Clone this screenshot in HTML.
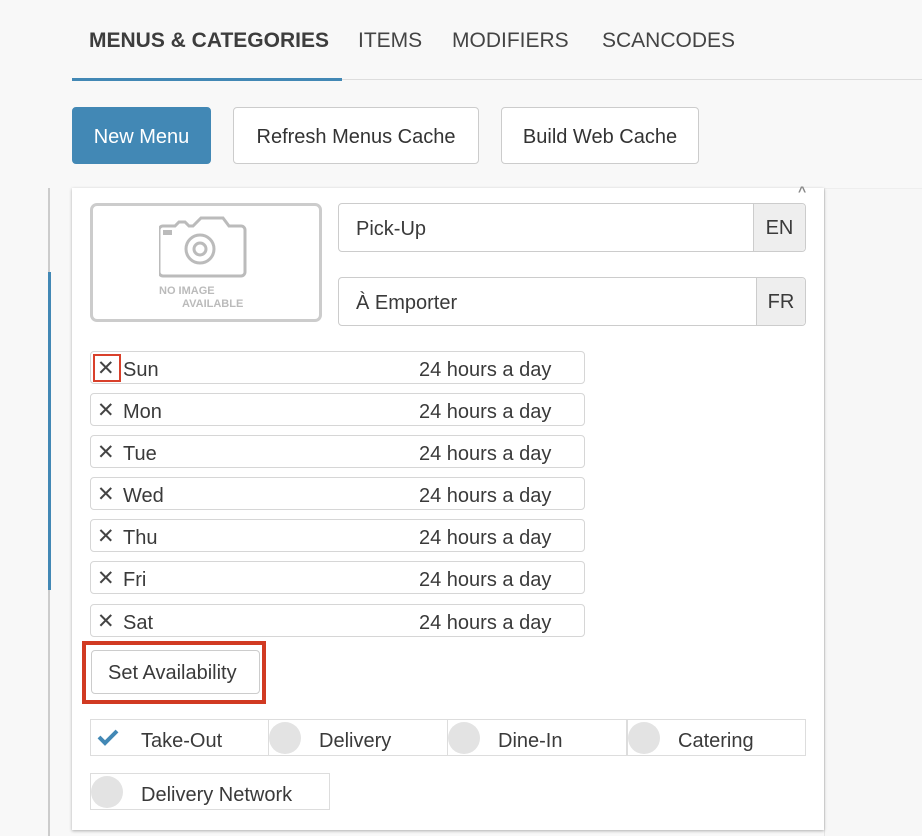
<!DOCTYPE html>
<html><head><meta charset="utf-8"><style>
*{box-sizing:border-box;margin:0;padding:0}
body{width:922px;height:836px;background:#f8f8f8;font-family:"Liberation Sans",sans-serif;color:#3a3a3a;position:relative;overflow:hidden}
.a{position:absolute}
.tab{position:absolute;top:29px;font-size:21px;color:#444}
.btn{position:absolute;top:107px;height:57px;border:1px solid #ccc;border-radius:4px;background:#fff;font-size:20px;display:flex;align-items:center;justify-content:center;color:#333;padding-top:3px}
.day{position:absolute;left:90px;width:495px;height:33px;border:1px solid #d6d6d6;border-radius:4px;background:#fff;font-size:20px}
.day .x{position:absolute;left:6px;top:6px;font-size:21px;line-height:21px;color:#444;font-weight:300}
.day .n{position:absolute;left:32px;top:7px}
.day .h{position:absolute;left:328px;top:7px}
.cell{position:absolute;height:37px;border:1px solid #ddd;background:#fff;font-size:20px}
.cell .c{position:absolute;left:0;top:2px;width:32px;height:32px;border-radius:50%;background:#e3e3e3}
.cell span{position:absolute;left:50px;top:10px}
.inp{position:absolute;left:338px;width:468px;height:49px;border:1px solid #ccc;border-radius:4px;background:#fff;font-size:20px}
.inp span{position:absolute;left:17px;top:14px}
.inp .ad{position:absolute;right:0;top:0;bottom:0;background:#eee;border-left:1px solid #ccc;display:flex;align-items:center;justify-content:center;border-radius:0 4px 4px 0;padding-top:2px}
</style></head><body>
<div class="tab" style="left:89px;font-weight:bold;color:#3d3d3d">MENUS &amp; CATEGORIES</div>
<div class="tab" style="left:358px">ITEMS</div>
<div class="tab" style="left:452px">MODIFIERS</div>
<div class="tab" style="left:602px">SCANCODES</div>
<div class="a" style="left:72px;top:79px;width:850px;height:1px;background:#ddd"></div>
<div class="a" style="left:72px;top:78px;width:270px;height:3px;background:#4288b5"></div>
<div class="btn" style="left:72px;width:139px;background:#4288b5;border-color:#4288b5;color:#fff">New Menu</div>
<div class="btn" style="left:233px;width:246px">Refresh Menus Cache</div>
<div class="btn" style="left:501px;width:198px">Build Web Cache</div>
<div class="a" style="left:48px;top:188px;width:2px;height:648px;background:#ccc"></div>
<div class="a" style="left:48px;top:272px;width:3px;height:318px;background:#4288b5"></div>
<div class="a" style="left:824px;top:188px;width:98px;height:648px;background:#f7f7f7;border-left:1px solid #e6e6e6;border-top:1px solid #eee"></div>
<div class="a" style="left:72px;top:188px;width:752px;height:642px;background:#fff;box-shadow:0 1px 3px rgba(0,0,0,.3)"></div>
<div class="a" style="left:798px;top:183px;font-size:14px;color:#888;font-weight:bold">^</div>
<div class="a" style="left:90px;top:203px;width:232px;height:119px;border:3px solid #ccc;border-radius:7px;background:#fff">
<svg class="a" style="left:66px;top:10px" width="88" height="65" viewBox="0 0 88 65"><path d="M4 10h12l4-4h6l4 4h4l8-8h22l6 8h12a4 4 0 0 1 4 4v42a4 4 0 0 1-4 4H4a4 4 0 0 1-4-4V14a4 4 0 0 1 4-4z" fill="none" stroke="#bbb" stroke-width="3"/><rect x="4" y="14" width="9" height="5" fill="#bbb"/><circle cx="41" cy="33" r="14" fill="none" stroke="#bbb" stroke-width="3"/><circle cx="41" cy="33" r="6" fill="none" stroke="#bbb" stroke-width="3"/></svg>
<div class="a" style="left:66px;top:79px;font-size:11px;color:#bbb;font-weight:bold">NO IMAGE</div>
<div class="a" style="left:89px;top:92px;font-size:11px;color:#bbb;font-weight:bold">AVAILABLE</div>
</div>
<div class="inp" style="top:203px"><span>Pick-Up</span><div class="ad" style="width:52px">EN</div></div>
<div class="inp" style="top:277px"><span>À Emporter</span><div class="ad" style="width:49px">FR</div></div>
<div class="day" style="top:351px"><div class="a" style="left:2px;top:2px;width:28px;height:28px;border:2px solid #d9402b"></div><span class="x">✕</span><span class="n">Sun</span><span class="h">24 hours a day</span></div>
<div class="day" style="top:393px"><span class="x">✕</span><span class="n">Mon</span><span class="h">24 hours a day</span></div>
<div class="day" style="top:435px"><span class="x">✕</span><span class="n">Tue</span><span class="h">24 hours a day</span></div>
<div class="day" style="top:477px"><span class="x">✕</span><span class="n">Wed</span><span class="h">24 hours a day</span></div>
<div class="day" style="top:519px"><span class="x">✕</span><span class="n">Thu</span><span class="h">24 hours a day</span></div>
<div class="day" style="top:561px"><span class="x">✕</span><span class="n">Fri</span><span class="h">24 hours a day</span></div>
<div class="day" style="top:604px"><span class="x">✕</span><span class="n">Sat</span><span class="h">24 hours a day</span></div>
<div class="a" style="left:82px;top:641px;width:184px;height:63px;border:4px solid #d13a22"></div>
<div class="a" style="left:91px;top:650px;width:169px;height:44px;border:1px solid #ccc;border-radius:4px;background:#fff;font-size:20px;padding:11px 0 0 16px">Set Availability</div>
<div class="cell" style="left:90px;top:719px;width:179px"><svg class="a" style="left:6px;top:8px" width="22" height="18" viewBox="0 0 22 18"><path d="M2 9l6 6L20 3" fill="none" stroke="#4288b5" stroke-width="4"/></svg><span>Take-Out</span></div>
<div class="cell" style="left:268px;top:719px;width:180px"><div class="c"></div><span>Delivery</span></div>
<div class="cell" style="left:447px;top:719px;width:180px"><div class="c"></div><span>Dine-In</span></div>
<div class="cell" style="left:627px;top:719px;width:179px"><div class="c"></div><span>Catering</span></div>
<div class="cell" style="left:90px;top:773px;width:240px"><div class="c"></div><span>Delivery Network</span></div>
</body></html>
